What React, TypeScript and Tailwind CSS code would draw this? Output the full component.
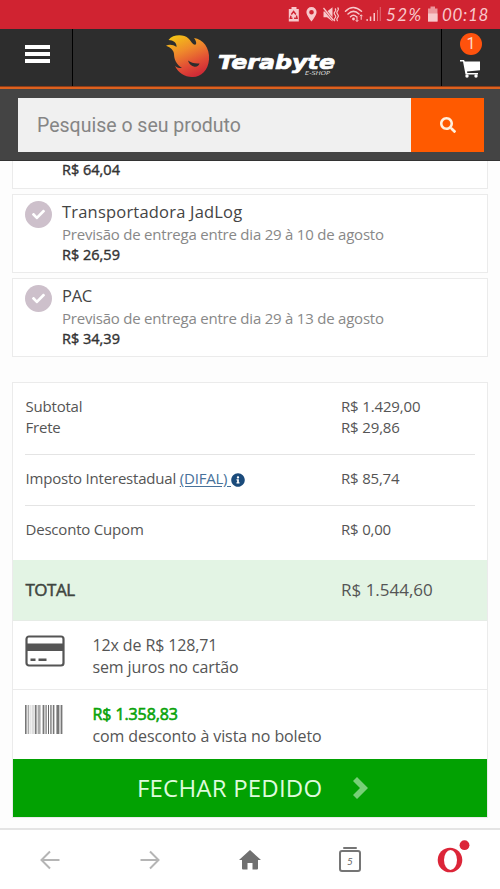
import React from "react";
import { FaCheck, FaInfoCircle, FaSearch } from "react-icons/fa";

const shippingOptions = [
  {
    name: "Transportadora JadLog",
    estimate: "Previsão de entrega entre dia 29 à 10 de agosto",
    price: "R$ 26,59",
    nameClass: "tracking-[0.2px]",
  },
  {
    name: "PAC",
    estimate: "Previsão de entrega entre dia 29 à 13 de agosto",
    price: "R$ 34,39",
    nameClass: "tracking-[-0.3px]",
  },
];

// [x, width, colour]
const barcode: [number, number, string][] = [
  [0, 1.6, "#777"],
  [2.6, 1.6, "#aaa"],
  [5.5, 0.8, "#ccc"],
  [7.5, 1, "#bbb"],
  [9.8, 1.8, "#777"],
  [12.6, 3, "#aaa"],
  [17.6, 1.8, "#777"],
  [20.4, 1.4, "#888"],
  [23, 1, "#666"],
  [25, 1.8, "#999"],
  [27.8, 1.6, "#777"],
  [31.4, 3, "#777"],
  [35.6, 1.8, "#777"],
];

function StatusBar() {
  return (
    <div className="flex h-[29px] items-center bg-[#d02331] pl-[288px] text-[#f8c8cb]">
      <svg width="100" height="20" viewBox="288 5 100 20" fill="currentColor" className="shrink-0">
        <path d="M291.5 7h5v2h2.3v12.5h-10V9h2.7z" />
        <path d="M291.3 14.5l2.3-3 2.3 3M296.4 15.5l.7 2.8h-3M292.5 18.3h-2.2l.7-2.5" fill="none" stroke="#d02331" strokeWidth="1.4" />
        <path fillRule="evenodd" d="M311.5 7a5.1 5.1 0 0 0-5.1 5.1c0 3.7 5.1 9.4 5.1 9.4s5.1-5.7 5.1-9.4a5.1 5.1 0 0 0-5.1-5.1zm0 2.9a2.3 2.3 0 1 1 0 4.6 2.3 2.3 0 0 1 0-4.6z" />
        <path d="M323.5 11.5h3.5l5.5-4.3v14.3l-5.5-4.3h-3.5z" />
        <path d="M323.5 8l10 12.5" stroke="#d02331" strokeWidth="2.4" />
        <path d="M323.5 8l10 12.5" stroke="currentColor" strokeWidth="1.3" />
        <path d="M335 8.5q1.6 1.6 0 3.2t0 3.2 0 3.2 0 3M337.6 7.5q1.6 1.7 0 3.4t0 3.4 0 3.4 0 3.4" fill="none" stroke="currentColor" strokeWidth="1.1" />
        <g fill="none" stroke="currentColor" strokeWidth="1.5" strokeLinecap="round">
          <path d="M345.5 11.3q7.5-7.5 16 0M348 14q5.5-5.2 11 0M350.5 16.7q3-2.8 6 0" />
        </g>
        <circle cx="353.5" cy="19" r="1.4" />
        <path d="M357 16.5v5m-1.3-1.4l1.3 1.4 1.3-1.4M361.2 19.8v-5m-1.3 1.4l1.3-1.4 1.3 1.4" fill="none" stroke="currentColor" strokeWidth="1" />
        <path d="M366.5 19h1.3v2h-1.3zM369.8 16.5h1.5v4.5h-1.5zM373.5 13h1.5v8h-1.5z" />
        <path d="M377 10h1v11h-1zM379.8 7h.9v14h-.9z" opacity=".5" />
      </svg>
      <span className="-ml-[2px] w-[38px] shrink-0 font-['Lato',sans-serif] text-[17px] leading-none tracking-[1.4px] whitespace-nowrap italic">52%</span>
      <svg width="18" height="20" viewBox="424 5 18 20" fill="currentColor" className="shrink-0">
        <path d="M430.5 6.5h4.5v2h2.5v13H428v-13h2.5z" opacity=".7" />
        <path d="M428 13.5h9.5v8H428z" />
      </svg>
      <span className="font-['Lato',sans-serif] text-[17px] leading-none tracking-[0.7px] whitespace-nowrap italic">00:18</span>
    </div>
  );
}

function FlameLogo() {
  return (
    <svg width="44" height="45" viewBox="0 0 44 45" className="shrink-0">
      <defs>
        <linearGradient id="flame" x1="0.15" y1="0" x2="0.6" y2="1">
          <stop offset="0" stopColor="#f3c614" />
          <stop offset="0.4" stopColor="#ef8a2b" />
          <stop offset="0.75" stopColor="#e14b35" />
          <stop offset="1" stopColor="#d02c36" />
        </linearGradient>
      </defs>
      <path
        d="M2.5 6C7 0 18 .2 22.5 4.5c2.7 2.5 3.7 5.8 6.500 6.300 1.800-.3 1.700-3-1-6.800C37 5 44 14 43 25.500 42.300 36.500 34.500 43.500 26 43c-7.500-.3-13.500-4-17-11 2.500 2 5 2.300 7 2-6-4-7.800-8.500-8-14C7.900 16.800 5 13.500 0 11.800c3-1.500 7-1.300 10.500 1.200C11 9 7.500 6 2.500 6z"
        fill="url(#flame)"
      />
      <path d="M22 26.5c3 2.400 6.500 3.300 11.500 3-.5 2.200-2.400 3.500-5 3.200-3-.3-5.500-2.700-6.500-6.200z" fill="#2d2d2d" />
    </svg>
  );
}

function Header() {
  return (
    <header>
      <div className="flex h-[57px] bg-[#2d2d2d]">
        <div className="flex w-[73px] flex-col gap-[3px] border-r border-black pt-4 pl-[25px]">
          <span className="h-1 w-[25px] bg-white" />
          <span className="h-1 w-[25px] bg-white" />
          <span className="h-1 w-[25px] bg-white" />
        </div>
        <div className="flex flex-1 pt-[5px] pl-[93px]">
          <FlameLogo />
          <div className="ml-[8px] w-[120px] pt-[17px] text-white">
            <svg width="120" height="25" viewBox="0 0 120 25" className="overflow-visible">
              <text x="0" y="17.5" textLength="117" lengthAdjust="spacingAndGlyphs" fill="#fff" stroke="#fff" strokeWidth="0.7" className="font-['DejaVu_Sans',sans-serif] text-[20px] font-bold italic">
                Terabyte
              </text>
              <text x="87" y="23.5" textLength="25" lengthAdjust="spacingAndGlyphs" fill="#ddd" className="font-['DejaVu_Sans',sans-serif] text-[5.5px] italic">
                E-SHOP
              </text>
            </svg>
          </div>
        </div>
        <div className="flex w-[59px] flex-col items-center border-l border-black pt-1">
          <span className="flex size-[22px] items-center justify-center rounded-full bg-[#ff520d] font-['Roboto',sans-serif] text-[16px] leading-none text-[#ffd9c4]">
            1
          </span>
          <svg width="20" height="18" viewBox="0 0 20 18" fill="#fff" className="mt-[5px] mr-[3px]">
            <path d="M0 0h4l.8 1.500H20v8.700L7 11.500l.3 1.500H18v1.500H5.500L3 1.600H0z" />
            <circle cx="7" cy="16" r="1.7" />
            <circle cx="16" cy="16" r="1.7" />
          </svg>
        </div>
      </div>
      <div className="h-[3px] border-t border-[#8d3c18] bg-[#dc611f]" />
      <div className="flex h-[72px] border-b border-[#333] bg-[#444] pt-[9px] pr-4 pl-[18px]">
        <div className="flex h-[54px] flex-1 items-center bg-[#f0f0f0] pt-[2px] pl-[19px] font-['Roboto',sans-serif] text-[19.5px] text-[#858585]">
          Pesquise o seu produto
        </div>
        <button className="flex h-[54px] w-[73px] items-center justify-center bg-[#ff5a00] text-[#fff0dd]">
          <FaSearch size={16} />
        </button>
      </div>
    </header>
  );
}

function PaymentBarcode() {
  return (
    <svg width="38" height="29" viewBox="0 0 38 29">
      {barcode.map(([x, w, fill]) => (
        <rect key={x} x={x} y="0" width={w} height="29" fill={fill} />
      ))}
    </svg>
  );
}

function Summary() {
  return (
    <section className="mx-3 mt-[25px] h-[436px] border border-[#ebebeb] bg-white text-[15px] text-[#555]">
      <div className="px-3 leading-[21px]">
        <div className="flex h-[72px] border-b border-[#e4e4e4] pt-[13px]">
          <div className="w-[316px] pl-[0.5px] tracking-[-0.2px]">
            <p>Subtotal</p>
            <p>Frete</p>
          </div>
          <div className="tracking-[-0.15px]">
            <p>R$ 1.429,00</p>
            <p>R$ 29,86</p>
          </div>
        </div>
        <div className="flex h-[51px] items-center border-b border-[#e4e4e4] pb-[4px] tracking-[-0.2px]">
          <div className="flex w-[316px] items-center pl-[0.5px] whitespace-pre">
            <span>Imposto Interestadual </span>
            <a className="text-[#47719a] underline underline-offset-2">(DIFAL) </a>
            <FaInfoCircle size={14} className="mt-[3px] text-[#1b4b7b]" />
          </div>
          <span>R$ 85,74</span>
        </div>
        <div className="flex h-[54px] items-center pb-[8px] tracking-[-0.2px]">
          <span className="w-[316px] pl-[0.5px]">Desconto Cupom</span>
          <span>R$ 0,00</span>
        </div>
      </div>
      <div className="flex h-[61px] items-center border-b border-[#e6ece6] bg-[#e3f4e4] px-3 text-[17px]">
        <span className="w-[316px] pl-[0.5px] tracking-[-0.5px] text-[#3f4540] [-webkit-text-stroke:0.5px_#3f4540]">TOTAL</span>
        <span>R$ 1.544,60</span>
      </div>
      <div className="flex h-[69px] border-b border-[#ebebeb] px-3 pt-[13px] text-[16px] leading-[22px] tracking-[-0.12px]">
        <div className="w-[67.5px] pt-[1px]">
          <svg width="40" height="32" viewBox="0 0 40 32" fill="#555">
            <rect x="1.5" y="1.5" width="37" height="29" rx="2.5" fill="#fff" stroke="#555" strokeWidth="2.2" />
            <path d="M1 8.5h38V16H1zM5.500 23.500h5V26h-5zM13.500 23.500h8V26h-8z" />
          </svg>
        </div>
        <div>
          <p>12x de R$ 128,71</p>
          <p>sem juros no cartão</p>
        </div>
      </div>
      <div className="flex h-[69px] px-3 pt-[13px] text-[16px] leading-[22px] tracking-[-0.1px]">
        <div className="w-[67.5px] pt-[2px]">
          <PaymentBarcode />
        </div>
        <div>
          <p className="text-[#0aa30a] [-webkit-text-stroke:0.6px_#0aa30a]">R$ 1.358,83</p>
          <p>com desconto à vista no boleto</p>
        </div>
      </div>
      <button className="flex h-[58px] w-full items-center bg-[#02a102] pl-[124px] text-[24px] tracking-[0.2px] text-[#defbdc]">
        <span className="w-[215px] text-left">FECHAR PEDIDO</span>
        <svg width="16" height="22" viewBox="0 0 16 22" fill="#77cf77">
          <path d="M1 4l4-4 11 11L5 22l-4-4 7-7z" />
        </svg>
      </button>
    </section>
  );
}

function BrowserNav() {
  return (
    <nav className="mt-[10px] flex h-[61px] items-center border-t-2 border-[#e4e4e4] bg-white">
      <div className="flex flex-1 justify-center">
        <svg width="20" height="20" viewBox="0 0 20 20" fill="none" stroke="#b5b5b5" strokeWidth="2">
          <path d="M10 1.5L1.500 10l8.500 8.500M1.500 10H19.500" />
        </svg>
      </div>
      <div className="flex flex-1 justify-center">
        <svg width="20" height="20" viewBox="0 0 20 20" fill="none" stroke="#b5b5b5" strokeWidth="2">
          <path d="M10 1.5l8.500 8.500-8.500 8.500M18.500 10H.5" />
        </svg>
      </div>
      <div className="flex flex-1 justify-center">
        <svg width="22" height="20" viewBox="0 0 22 20" fill="#707070">
          <path d="M11 0l11 10h-3v8.500a1 1 0 0 1-1 1h-4.500V13h-5v6.500H4a1 1 0 0 1-1-1V10H0z" />
        </svg>
      </div>
      <div className="flex flex-1 flex-col items-center gap-[1px]">
        <span className="h-[2px] w-[14px] rounded bg-[#757575]" />
        <span className="flex h-[22px] w-[22px] items-center justify-center rounded-[3px] border-2 border-[#757575] font-['Lato',sans-serif] text-[10px] leading-none text-[#666] italic">
          5
        </span>
      </div>
      <div className="flex flex-1 justify-center">
        <svg width="40" height="40" viewBox="0 0 40 40" fill="#dc2538">
          <circle cx="20" cy="20" r="12.3" />
          <ellipse cx="20.500" cy="20" rx="6.5" ry="10" fill="#fff" />
          <circle cx="34.5" cy="5.2" r="4.9" />
        </svg>
      </div>
    </nav>
  );
}

export default function App() {
  return (
    <div className="h-[889px] w-[500px] overflow-hidden bg-[#fdfdfd] font-['Open_Sans',sans-serif]">
      <StatusBar />
      <Header />
      <main>
        <div className="mx-3 h-[28px] border border-t-0 border-[#ebebeb] bg-white pl-[49px] text-[14.5px] leading-[18px] text-[#333] [-webkit-text-stroke:0.4px_#333]">
          R$ 64,04
        </div>
        {shippingOptions.map((option) => (
          <div key={option.name} className="mx-3 mt-[5px] flex h-[79px] border border-[#ebebeb] bg-white pt-[6px] pl-3">
            <span className="flex size-[27px] items-center justify-center rounded-full bg-[#cdc0cb] text-white">
              <FaCheck size={13} />
            </span>
            <div className="pl-[10px]">
              <p className={`text-[16.5px] leading-[22px] text-[#444] ${option.nameClass}`}>{option.name}</p>
              <p className="text-[15px] leading-[22px] tracking-[-0.22px] text-[#888]">{option.estimate}</p>
              <p className="text-[14.5px] leading-[19px] text-[#333] [-webkit-text-stroke:0.4px_#333]">{option.price}</p>
            </div>
          </div>
        ))}
        <Summary />
      </main>
      <BrowserNav />
    </div>
  );
}
